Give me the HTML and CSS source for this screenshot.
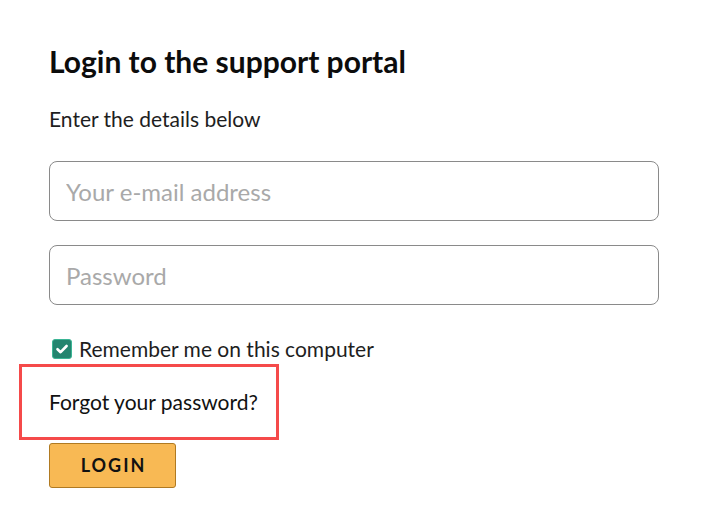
FILE: index.html
```html
<!DOCTYPE html>
<html lang="en">
<head>
<meta charset="utf-8">
<title>Login</title>
<link rel="stylesheet" href="styles.css">
</head>
<body>
<main class="page">
  <h1 class="title">Login to the support portal</h1>
  <p class="lead">Enter the details below</p>
  <form class="form">
    <input class="field" type="email" placeholder="Your e-mail address">
    <input class="field" type="password" placeholder="Password">
    <label class="remember">
      <span class="check">
        <svg viewBox="0 0 20 20" width="20" height="20"><path d="M5.5 10.2 L8.6 13.2 L14.6 7" fill="none" stroke="#fff" stroke-width="2.6" stroke-linecap="round" stroke-linejoin="round"/></svg>
      </span>
      <span>Remember me on this computer</span>
    </label>
    <div class="forgot-wrap">
      <a class="forgot" href="#">Forgot your password?</a>
      <span class="highlight"></span>
    </div>
    <button class="login" type="button">LOGIN</button>
  </form>
</main>
</body>
</html>
```
FILE: styles.css
```css
html, body {
  margin: 0;
  padding: 0;
  background: #fff;
}
body {
  font-family: Lato, "Noto Sans", sans-serif;
  color: #1e1e1e;
}
.page {
  padding: 41px 53px 0 49px;
}
.title {
  margin: 0;
  font-size: 30px;
  line-height: 40px;
  font-weight: 700;
  color: #0c0c0c;
}
.lead {
  margin: 26px 0 0;
  font-size: 21px;
  line-height: 24px;
}
.form {
  display: flex;
  flex-direction: column;
  align-items: flex-start;
  margin-top: 30px;
}
.field {
  box-sizing: border-box;
  width: 610px;
  height: 60px;
  margin: 0 0 24px;
  padding: 0 16px;
  border: 1px solid #8a8a8a;
  border-radius: 8px;
  font-family: Lato, "Noto Sans", sans-serif;
  font-size: 24px;
  line-height: 29px;
  color: #222;
  outline: none;
}
.field::placeholder {
  color: #a9a9a9;
}
.remember {
  display: flex;
  align-items: center;
  gap: 7px;
  margin-top: 8px;
  margin-left: 3px;
  font-size: 21px;
  line-height: 24px;
}
.check {
  box-sizing: border-box;
  width: 20px;
  height: 20px;
  border-radius: 3px;
  background: #23856f;
  border: 1px solid #3bb595;
  display: flex;
  align-items: center;
  justify-content: center;
}
.check svg {
  display: block;
  margin: -1px;
}
.forgot-wrap {
  position: relative;
  margin-top: 29px;
}
.forgot {
  display: block;
  font-size: 21px;
  line-height: 24px;
  color: #111;
  text-decoration: none;
}
.highlight {
  position: absolute;
  left: -30px;
  top: -26px;
  width: 260px;
  height: 76px;
  box-sizing: border-box;
  border: 3px solid #f54a4a;
  pointer-events: none;
}
.login {
  box-sizing: border-box;
  margin-top: 29px;
  width: 127px;
  height: 45px;
  padding: 0;
  border: 1px solid #b07a22;
  border-radius: 3px;
  background: #f8b954;
  font-family: Lato, "Noto Sans", sans-serif;
  font-size: 18px;
  line-height: 43px;
  font-weight: 700;
  letter-spacing: 2px;
  text-indent: 2px;
  color: #111;
}
```
